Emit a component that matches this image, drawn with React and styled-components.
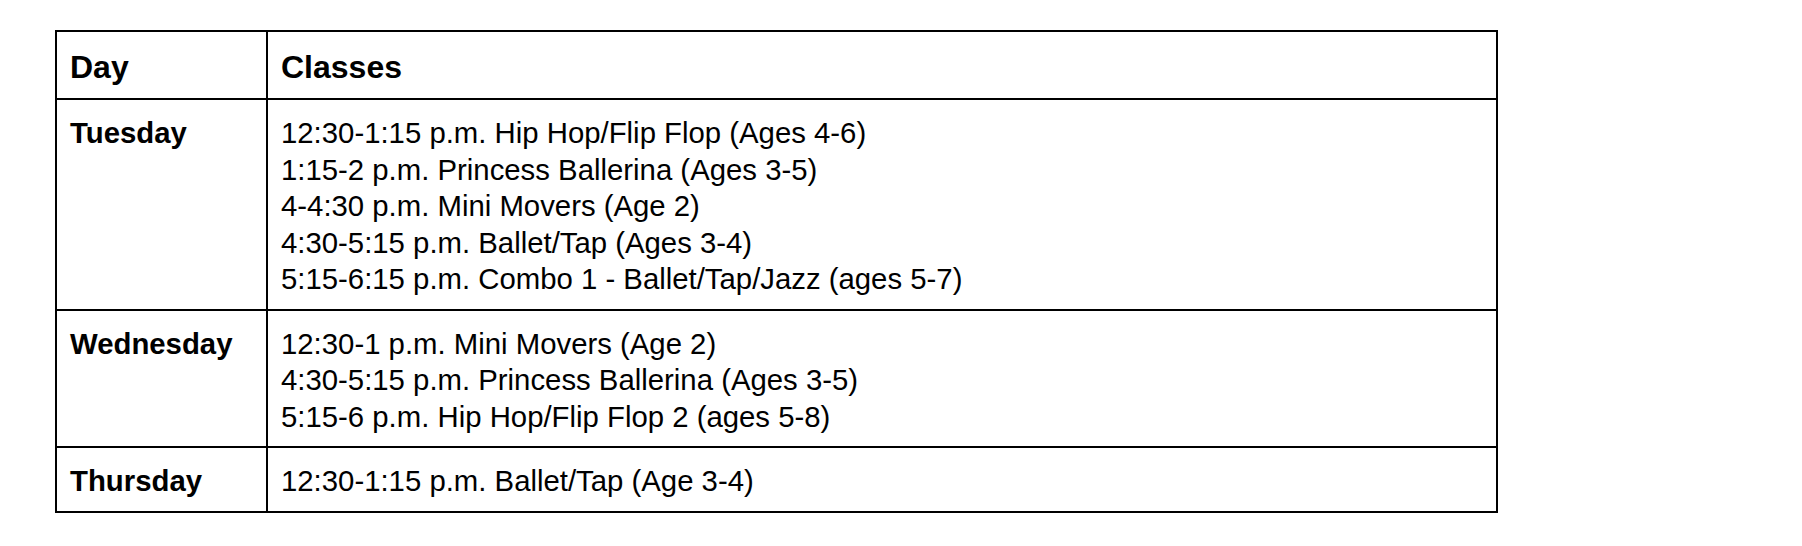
import React from "react";
import styled, { createGlobalStyle } from "styled-components";

const GlobalStyle = createGlobalStyle`
  html, body {
    margin: 0;
    padding: 0;
    background: #ffffff;
  }
  body {
    font-family: "Liberation Sans", Arial, sans-serif;
    color: #000000;
  }
`;

const Page = styled.div`
  padding: 30px 0 0 55px;
`;

const Table = styled.table`
  border-collapse: collapse;
  width: 1443px;
  table-layout: fixed;
`;

const Cell = styled.td`
  border: 2px solid #000;
  padding: 15px 13px 11px 13px;
  vertical-align: top;
  font-size: ${(p) => (p.$head ? "32px" : "29.33px")};
  line-height: ${(p) => (p.$head ? "40px" : "36.5px")};
  font-weight: ${(p) => (p.$bold || p.$head ? 700 : 400)};
  width: ${(p) => (p.$narrow ? "183px" : "auto")};
`;

const Line = styled.div`
  white-space: nowrap;
`;

const schedule = [
  {
    day: "Tuesday",
    classes: [
      "12:30-1:15 p.m. Hip Hop/Flip Flop (Ages 4-6)",
      "1:15-2 p.m. Princess Ballerina (Ages 3-5)",
      "4-4:30 p.m. Mini Movers (Age 2)",
      "4:30-5:15 p.m. Ballet/Tap (Ages 3-4)",
      "5:15-6:15 p.m. Combo 1 - Ballet/Tap/Jazz (ages 5-7)",
    ],
  },
  {
    day: "Wednesday",
    classes: [
      "12:30-1 p.m. Mini Movers (Age 2)",
      "4:30-5:15 p.m. Princess Ballerina (Ages 3-5)",
      "5:15-6 p.m. Hip Hop/Flip Flop 2 (ages 5-8)",
    ],
  },
  {
    day: "Thursday",
    classes: ["12:30-1:15 p.m. Ballet/Tap (Age 3-4)"],
  },
];

const App = () => {
  return (
    <Page>
      <GlobalStyle />
      <Table>
        <tbody>
          <tr>
            <Cell $head $narrow>Day</Cell>
            <Cell $head>Classes</Cell>
          </tr>
          {schedule.map((row) => (
            <tr key={row.day}>
              <Cell $bold $narrow>{row.day}</Cell>
              <Cell>
                {row.classes.map((c) => (
                  <Line key={c}>{c}</Line>
                ))}
              </Cell>
            </tr>
          ))}
        </tbody>
      </Table>
    </Page>
  );
};

export default App;
